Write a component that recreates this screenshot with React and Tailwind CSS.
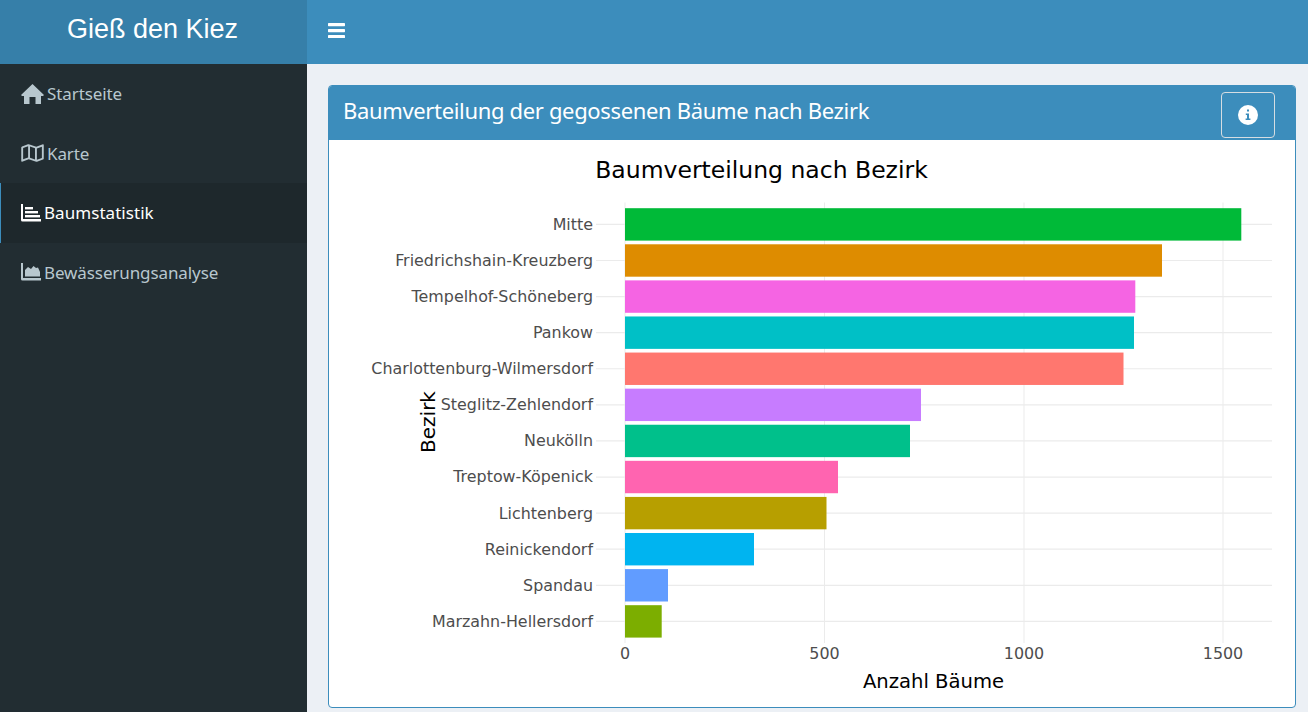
import React from 'react'
import { FaRegMap } from 'react-icons/fa'

const HomeIcon = () => (
  <svg viewBox="0 0 23 20" className="mt-[1px] h-5 w-[23px] shrink-0" fill="currentColor">
    <path d="M11.5 0 L23 11 L22 12 H20 V20 H14.5 V13 H8.5 V20 H3 V12 H1 L0 11 Z" />
  </svg>
)

const BarsIcon = () => (
  <svg viewBox="0 0 20 18" className="h-[18px] w-5 shrink-0" fill="currentColor">
    <path d="M0 0 H2 V15 H20 V17.5 H1.5 Q0 17.5 0 16 Z" />
    <rect x="4" y="3" width="8" height="2.4" />
    <rect x="4" y="7" width="13" height="2.4" />
    <rect x="4" y="11" width="15" height="2.4" />
  </svg>
)

const AreaIcon = () => (
  <svg viewBox="0 0 20 18" className="h-[18px] w-5 shrink-0" fill="currentColor">
    <path d="M0 0 H2 V15 H20 V17.5 H1.5 Q0 17.5 0 16 Z" />
    <path d="M4 13.5 V7 L7 4 L10 6 L12.5 3 L15 5 L17 4.5 L19 9 V13.5 Z" />
  </svg>
)

const navItems = [
  { label: 'Startseite', icon: HomeIcon, textClass: 'ml-[3px]' },
  { label: 'Karte', icon: () => <FaRegMap className="h-5 w-[23px] shrink-0" />, textClass: 'ml-[3px]' },
  { label: 'Baumstatistik', icon: BarsIcon, active: true, textClass: 'ml-[3px] tracking-[0.05px]' },
  { label: 'Bewässerungsanalyse', icon: AreaIcon, textClass: 'ml-[3px]' },
]

const bars = [
  { name: 'Mitte', end: 1241.3, color: '#00ba38' },
  { name: 'Friedrichshain-Kreuzberg', end: 1162, color: '#de8c00' },
  { name: 'Tempelhof-Schöneberg', end: 1135.3, color: '#f564e3' },
  { name: 'Pankow', end: 1134, color: '#00c0c6' },
  { name: 'Charlottenburg-Wilmersdorf', end: 1123.5, color: '#ff776f' },
  { name: 'Steglitz-Zehlendorf', end: 921, color: '#c77cff' },
  { name: 'Neukölln', end: 910, color: '#00c08b' },
  { name: 'Treptow-Köpenick', end: 838, color: '#ff64b0' },
  { name: 'Lichtenberg', end: 826.5, color: '#b79f00' },
  { name: 'Reinickendorf', end: 754, color: '#00b4f0' },
  { name: 'Spandau', end: 668, color: '#619cff' },
  { name: 'Marzahn-Hellersdorf', end: 661.7, color: '#7cae00' },
]

const ticks = [
  { x: 625, label: '0' },
  { x: 824.5, label: '500' },
  { x: 1024, label: '1000' },
  { x: 1223, label: '1500' },
]

const Chart = () => (
  <svg viewBox="329 140 966 567" className="block h-[567px] w-full" fontFamily="'DejaVu Sans', sans-serif">
    <text x="761.5" y="178" textAnchor="middle" fontSize="23.5" fill="#000">Baumverteilung nach Bezirk</text>

    {ticks.map((t) => (
      <line key={t.x} x1={t.x} x2={t.x} y1="202.5" y2="643" stroke="#ebebeb" strokeWidth="1" />
    ))}
    {bars.map((b, i) => {
      const cy = 224.4 + i * 36.09
      return (
        <g key={b.name}>
          <line x1="596" x2="1272" y1={cy} y2={cy} stroke="#ebebeb" strokeWidth="1.2" />
          <rect x="625" y={cy - 16.2} width={b.end - 625} height="32.4" fill={b.color} />
          <text x="593" y={cy + 5.4} textAnchor="end" fontSize="15.9" fill="#4d4d4d">{b.name}</text>
        </g>
      )
    })}
    {ticks.map((t) => (
      <text key={t.label} x={t.x} y="659" textAnchor="middle" fontSize="15.9" fill="#4d4d4d">{t.label}</text>
    ))}

    <text x="933.5" y="688" textAnchor="middle" fontSize="19.6" fill="#000">Anzahl Bäume</text>
    <text transform="translate(435 422) rotate(-90)" textAnchor="middle" fontSize="20" fill="#000">Bezirk</text>
  </svg>
)

export default function App() {
  return (
    <div className="flex h-[712px] w-[1308px] overflow-hidden bg-[#ecf0f5] font-['Noto_Sans',sans-serif]">
      <aside className="flex w-[307px] shrink-0 flex-col bg-[#222d32]">
        <div className="flex h-16 items-center justify-center bg-[#367fa9] pb-[5px] pr-[2px] font-['Liberation_Sans',sans-serif] text-[27px] text-white">
          Gieß den Kiez
        </div>
        <nav className="flex flex-col">
          {navItems.map(({ label, icon: Icon, active, textClass }) => (
            <a
              key={label}
              className={`flex h-[59.5px] items-center border-l pl-5 text-[17px] tracking-[-0.1px] ${
                active ? 'border-[#3c8dbc] bg-[#1e282c] text-white' : 'border-transparent text-[#b8c7ce]'
              }`}
            >
              <Icon />
              <span className={textClass}>{label}</span>
            </a>
          ))}
        </nav>
      </aside>

      <div className="flex min-w-0 flex-1 flex-col">
        <header className="flex h-16 items-center bg-[#3c8dbc] pl-[21px] text-white">
          <svg viewBox="0 0 17 15.4" className="mb-[3px] h-[15.4px] w-[17px]" fill="currentColor">
            <rect width="17" height="3.2" rx="0.6" />
            <rect y="6" width="17" height="3.2" rx="0.6" />
            <rect y="12" width="17" height="3.2" rx="0.6" />
          </svg>
        </header>
        <main className="px-[21px] pt-[21px]">
          <section className="h-[623px] w-[968px] overflow-hidden rounded-[4px] border border-[#3c8dbc] bg-white">
            <div className="flex h-[54px] items-center justify-between bg-[#3c8dbc] pl-[14px] pr-5 text-white">
              <h3 className="mb-[6px] text-[22px] tracking-[-0.34px]">Baumverteilung der gegossenen Bäume nach Bezirk</h3>
              <button className="mt-[4px] flex h-[46px] w-[54px] items-center justify-center rounded-[4px] border border-[#d6dde2]">
                <svg viewBox="0 0 20 20" className="h-5 w-5">
                  <circle cx="10" cy="10" r="10" fill="#fff" />
                  <rect x="9" y="4.5" width="2" height="2" fill="#3c8dbc" />
                  <path d="M7.8 8.5 H11 V13.5 H12.4 V15 H7.6 V13.5 H9 V10 H7.8 Z" fill="#3c8dbc" />
                </svg>
              </button>
            </div>
            <Chart />
          </section>
        </main>
      </div>
    </div>
  )
}
